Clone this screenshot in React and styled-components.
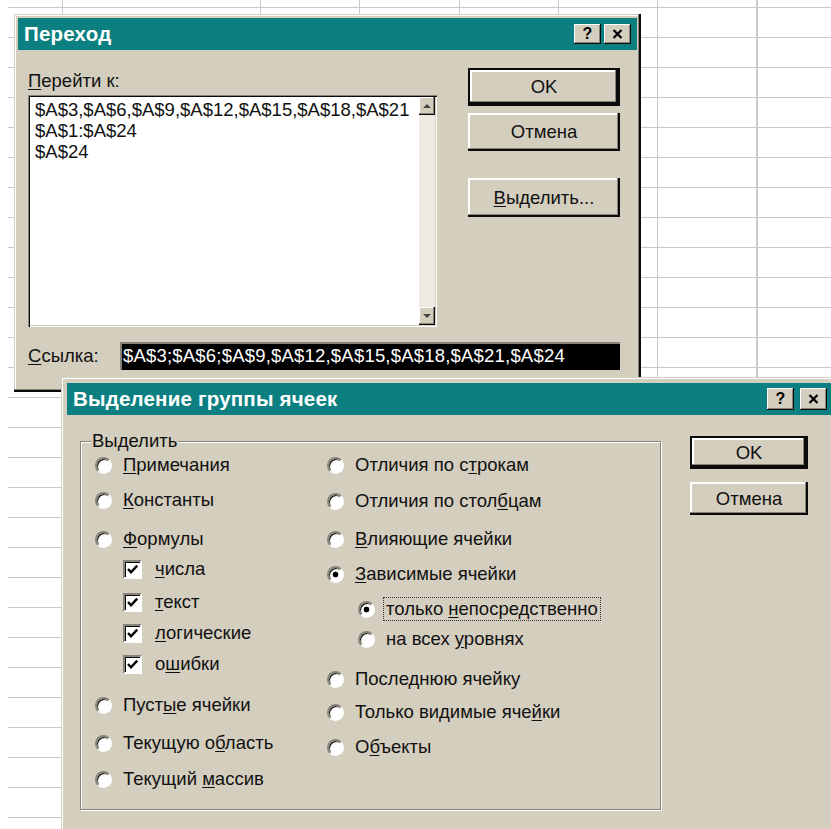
import React from 'react';
import styled, { createGlobalStyle } from 'styled-components';

const C = {
  face: '#d4cebf',
  light: '#ffffff',
  shadow: '#878379',
  dark: '#0b0b0b',
  title: '#0c7f80',
  grid: '#c9c9c9',
  text: '#111111',
};

const FONT = '"Liberation Sans", Arial, sans-serif';

const GlobalStyle = createGlobalStyle`
  html, body { margin: 0; padding: 0; background: #fff; }
  body { font-family: ${FONT}; }
`;

/* spreadsheet sheet under the dialogs */
const Desktop = styled.main`
  position: relative;
  width: 831px;
  height: 829px;
  overflow: hidden;
  background-color: #fff;
  background-image:
    linear-gradient(${C.grid}, ${C.grid}),
    repeating-linear-gradient(to right, ${C.grid} 0 1px, transparent 1px 99.3px),
    repeating-linear-gradient(to bottom, transparent 0 7px, ${C.grid} 7px 8px, transparent 8px 30px);
  background-size: 1px 100%, 580px 100%, 823px 100%;
  background-position: 62px 0, 260px 0, 8px 0;
  background-repeat: no-repeat;
`;

const Window = styled.section`
  position: absolute;
  left: ${(p) => p.$x}px;
  top: ${(p) => p.$y}px;
  width: ${(p) => p.$w}px;
  height: ${(p) => p.$h}px;
  box-sizing: border-box;
  padding: ${(p) => p.$frame}px;
  background: ${C.face};
  box-shadow: inset -2px -2px ${C.dark}, inset -3px -3px ${C.shadow},
    inset 1px 1px ${C.face}, inset 2px 2px ${C.light};
  display: flex;
  flex-direction: column;
  font-family: ${FONT};
  font-size: 18.5px;
  color: ${C.text};
`;

const TitleBar = styled.header`
  flex: none;
  height: 32px;
  background: ${C.title};
  display: flex;
  align-items: center;
  justify-content: space-between;
  padding: 0 ${(p) => p.$right}px 0 6px;
`;

const Caption = styled.h1`
  margin: 0;
  color: #fff;
  font: bold 20.5px ${FONT};
  letter-spacing: 0.2px;
  white-space: nowrap;
`;

const TitleButtons = styled.div`
  display: flex;
  gap: ${(p) => p.$gap}px;
`;

const TitleButton = styled.button`
  box-sizing: border-box;
  width: 27px;
  height: ${(p) => p.$h}px;
  padding: 0;
  border: 0;
  background: ${C.face};
  box-shadow: inset -1px -1px ${C.dark}, inset 1px 1px ${C.light},
    inset -2px -2px ${C.shadow};
  display: flex;
  align-items: center;
  justify-content: center;
  font: bold 16px ${FONT};
  color: #000;
`;

const Key = styled.span`
  text-decoration: underline;
  text-underline-offset: 2px;
`;

const Mnemonic = ({ text, at }) =>
  at == null ? (
    text
  ) : (
    <>
      {text.slice(0, at)}
      <Key>{text[at]}</Key>
      {text.slice(at + 1)}
    </>
  );

const PushButton = styled.button`
  box-sizing: border-box;
  width: 100%;
  height: ${(p) => p.$h}px;
  margin-top: ${(p) => p.$space || 0}px;
  padding: 0;
  background: ${C.face};
  border: ${(p) => (p.$default ? `2px solid ${C.dark}` : '0')};
  box-shadow: inset -2px -2px ${C.dark}, inset -3px -3px ${C.shadow},
    inset 2px 2px ${C.light};
  font: 18.5px ${FONT};
  color: ${C.text};
`;

const ButtonColumn = styled.div`
  display: flex;
  flex-direction: column;
  padding-top: ${(p) => p.$top || 0}px;
`;

/* ---------- "Переход" dialog ---------- */

const GoToBody = styled.div`
  display: grid;
  grid-template-columns: 409px 152px;
  column-gap: 31px;
  padding: 18px 17px 0 10px;
`;

const LeftColumn = styled.div`
  display: flex;
  flex-direction: column;
  padding-top: 2px;
`;

const FieldLabel = styled.div`
  line-height: 22px;
  white-space: nowrap;
`;

const ListBox = styled.div`
  box-sizing: border-box;
  margin-top: 3px;
  height: 232px;
  background: #fff;
  padding: 2px;
  display: flex;
  box-shadow: inset 1px 1px ${C.shadow}, inset 2px 2px ${C.dark},
    inset -1px -1px ${C.light}, inset -2px -2px ${C.face};
`;

const ListItems = styled.ul`
  flex: 1;
  margin: 0;
  padding: 2px 0 0 5px;
  list-style: none;
  line-height: 21px;
  white-space: nowrap;
  overflow: hidden;
`;

const ScrollTrack = styled.div`
  flex: none;
  width: 16px;
  display: flex;
  flex-direction: column;
  justify-content: space-between;
  background: #eeebe3;
`;

const ScrollArrow = styled.div`
  box-sizing: border-box;
  height: 18px;
  background: ${C.face};
  box-shadow: inset -1px -1px ${C.dark}, inset -2px -2px ${C.shadow},
    inset 1px 1px ${C.light};
  display: flex;
  align-items: center;
  justify-content: center;
  &::before {
    content: '';
    border-left: 4px solid transparent;
    border-right: 4px solid transparent;
    ${(p) => (p.$dir === 'up' ? 'border-bottom' : 'border-top')}: 4px solid #444;
  }
`;

const RefRow = styled.div`
  grid-column: 1 / -1;
  margin-top: 15px;
  display: grid;
  grid-template-columns: 92px 500px;
  align-items: center;
`;

const RefField = styled.div`
  box-sizing: border-box;
  height: 28px;
  background: #000;
  color: #fff;
  padding: 0 3px;
  display: flex;
  align-items: center;
  white-space: nowrap;
  letter-spacing: 0.2px;
  box-shadow: inset 2px 2px ${C.shadow};
`;

/* ---------- "Выделение группы ячеек" dialog ---------- */

const SpecialBody = styled.div`
  display: grid;
  grid-template-columns: 581px 118px;
  column-gap: 29px;
  align-items: start;
  padding: 18px 0 0 13px;
`;

const GroupBox = styled.fieldset`
  box-sizing: border-box;
  margin: 0;
  min-width: 0;
  height: 377px;
  padding: 0 0 0 14px;
  border: 1px solid ${C.shadow};
  box-shadow: 1px 1px 0 ${C.light}, inset 1px 1px 0 ${C.light};
`;

const GroupTitle = styled.legend`
  margin-left: -4px;
  padding: 0 1px;
  line-height: 16px;
  background: ${C.face};
`;

const Columns = styled.div`
  display: grid;
  grid-template-columns: 232px 1fr;
  padding-top: 1px;
`;

const OptionList = styled.div`
  display: flex;
  flex-direction: column;
`;

const OptionRow = styled.div`
  display: flex;
  align-items: center;
  height: 30px;
  margin-top: ${(p) => p.$space}px;
  padding-left: ${(p) => p.$indent}px;
  white-space: nowrap;
`;

const Radio = styled.span`
  box-sizing: border-box;
  flex: none;
  width: 17px;
  height: 17px;
  margin-right: 8px;
  border-radius: 50%;
  border: 2px solid;
  border-color: ${C.shadow} ${C.light} ${C.light} ${C.shadow};
  background: ${(p) =>
    p.$on ? 'radial-gradient(circle, #000 0 2.6px, #fff 3.2px)' : '#fff'};
  box-shadow: inset 1px 1px 0 ${C.dark};
`;

const CheckBox = styled.span`
  box-sizing: border-box;
  flex: none;
  width: 19px;
  height: 19px;
  margin-right: 10px;
  border: 2px solid;
  border-color: ${C.shadow} ${C.light} ${C.light} ${C.shadow};
  box-shadow: inset 1px 1px 0 ${C.dark};
  background: #fff;
  display: flex;
  align-items: center;
  justify-content: center;
`;

const OptionText = styled.span`
  padding: 0 2px;
  line-height: 22px;
  border: 1px dotted ${(p) => (p.$focus ? '#333' : 'transparent')};
`;

const CheckMark = () => (
  <svg width="13" height="12" viewBox="0 0 13 12" aria-hidden="true">
    <path d="M2 6 L5 9.2 L11.2 2.6" fill="none" stroke="#000" strokeWidth="2.4" />
  </svg>
);

const CloseGlyph = () => (
  <svg width="11" height="10" viewBox="0 0 11 10" aria-hidden="true">
    <path d="M1.5 1 L9.5 9 M9.5 1 L1.5 9" fill="none" stroke="#000" strokeWidth="2.2" />
  </svg>
);

const leftOptions = [
  { kind: 'radio', text: 'Примечания', at: 0, space: 0 },
  { kind: 'radio', text: 'Константы', at: 0, space: 5 },
  { kind: 'radio', text: 'Формулы', at: 0, space: 9 },
  { kind: 'check', text: 'числа', at: 0, space: 0, indent: 28 },
  { kind: 'check', text: 'текст', at: 0, space: 3, indent: 28 },
  { kind: 'check', text: 'логические', at: 0, space: 1, indent: 28 },
  { kind: 'check', text: 'ошибки', at: 1, space: 1, indent: 28 },
  { kind: 'radio', text: 'Пустые ячейки', at: 4, space: 11 },
  { kind: 'radio', text: 'Текущую область', at: 9, space: 8 },
  { kind: 'radio', text: 'Текущий массив', at: 8, space: 6 },
];

const rightOptions = [
  { kind: 'radio', text: 'Отличия по строкам', at: 12, space: 0 },
  { kind: 'radio', text: 'Отличия по столбцам', at: 15, space: 6 },
  { kind: 'radio', text: 'Влияющие ячейки', at: 0, space: 8 },
  { kind: 'radio', text: 'Зависимые ячейки', at: 0, space: 5, on: true },
  { kind: 'radio', text: 'только непосредственно', at: 7, space: 5, indent: 31, on: true, focus: true },
  { kind: 'radio', text: 'на всех уровнях', at: 8, space: 0, indent: 31 },
  { kind: 'radio', text: 'Последнюю ячейку', at: 5, space: 10 },
  { kind: 'radio', text: 'Только видимые ячейки', at: 18, space: 3 },
  { kind: 'radio', text: 'Объекты', at: 1, space: 5 },
];

const Option = ({ kind, text, at, space, indent = 0, on, focus }) => (
  <OptionRow $space={space} $indent={indent}>
    {kind === 'radio' ? <Radio $on={on} /> : <CheckBox><CheckMark /></CheckBox>}
    <OptionText $focus={focus}>
      <Mnemonic text={text} at={at} />
    </OptionText>
  </OptionRow>
);

const TitleControls = ({ h, gap }) => (
  <TitleButtons $gap={gap}>
    <TitleButton $h={h}>?</TitleButton>
    <TitleButton $h={h}>
      <CloseGlyph />
    </TitleButton>
  </TitleButtons>
);

export default function App() {
  return (
    <Desktop>
      <GlobalStyle />

      <Window $x={14} $y={14} $w={627} $h={378} $frame={4}>
        <TitleBar $right={6}>
          <Caption>Переход</Caption>
          <TitleControls h={20} gap={3} />
        </TitleBar>
        <GoToBody>
          <LeftColumn>
            <FieldLabel>
              <Mnemonic text="Перейти к:" at={0} />
            </FieldLabel>
            <ListBox>
              <ListItems>
                <li>$A$3,$A$6,$A$9,$A$12,$A$15,$A$18,$A$21</li>
                <li>$A$1:$A$24</li>
                <li>$A$24</li>
              </ListItems>
              <ScrollTrack>
                <ScrollArrow $dir="up" />
                <ScrollArrow $dir="down" />
              </ScrollTrack>
            </ListBox>
          </LeftColumn>
          <ButtonColumn>
            <PushButton $h={38} $default>OK</PushButton>
            <PushButton $h={38} $space={7}>Отмена</PushButton>
            <PushButton $h={39} $space={27}>
              <Mnemonic text="Выделить..." at={0} />
            </PushButton>
          </ButtonColumn>
          <RefRow>
            <FieldLabel>
              <Mnemonic text="Ссылка:" at={0} />
            </FieldLabel>
            <RefField>$A$3;$A$6;$A$9,$A$12,$A$15,$A$18,$A$21,$A$24</RefField>
          </RefRow>
        </GoToBody>
      </Window>

      <Window $x={61} $y={377} $w={776} $h={460} $frame={6}>
        <TitleBar $right={4}>
          <Caption>Выделение группы ячеек</Caption>
          <TitleControls h={22} gap={6} />
        </TitleBar>
        <SpecialBody>
          <GroupBox>
            <GroupTitle>Выделить</GroupTitle>
            <Columns>
              <OptionList>
                {leftOptions.map((o) => (
                  <Option key={o.text} {...o} />
                ))}
              </OptionList>
              <OptionList>
                {rightOptions.map((o) => (
                  <Option key={o.text} {...o} />
                ))}
              </OptionList>
            </Columns>
          </GroupBox>
          <ButtonColumn $top={3}>
            <PushButton $h={33} $default>OK</PushButton>
            <PushButton $h={33} $space={13}>Отмена</PushButton>
          </ButtonColumn>
        </SpecialBody>
      </Window>
    </Desktop>
  );
}
